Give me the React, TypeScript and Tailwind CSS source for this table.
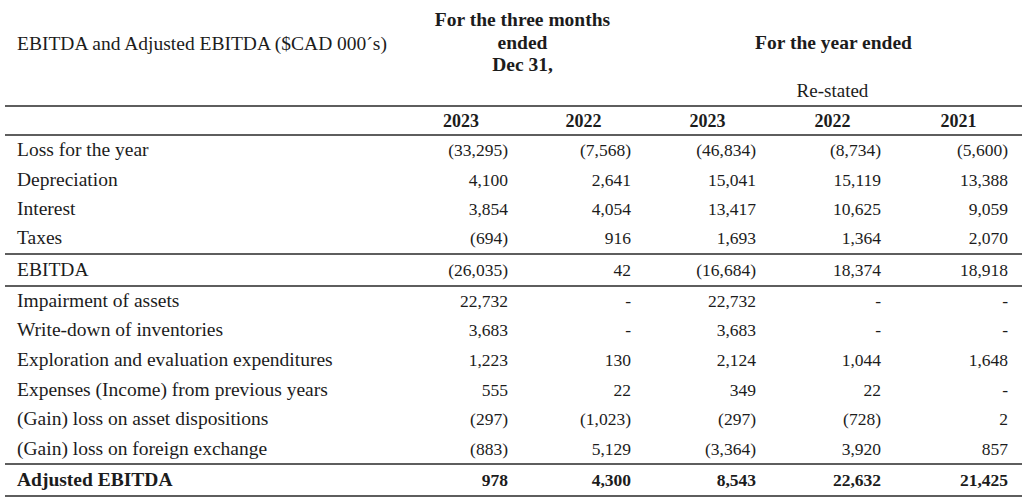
const rows: { label: string; values: string[]; total?: boolean; bold?: boolean }[] = [
  { label: 'Loss for the year', values: ['(33,295)', '(7,568)', '(46,834)', '(8,734)', '(5,600)'] },
  { label: 'Depreciation', values: ['4,100', '2,641', '15,041', '15,119', '13,388'] },
  { label: 'Interest', values: ['3,854', '4,054', '13,417', '10,625', '9,059'] },
  { label: 'Taxes', values: ['(694)', '916', '1,693', '1,364', '2,070'] },
  { label: 'EBITDA', values: ['(26,035)', '42', '(16,684)', '18,374', '18,918'], total: true },
  { label: 'Impairment of assets', values: ['22,732', '-', '22,732', '-', '-'] },
  { label: 'Write-down of inventories', values: ['3,683', '-', '3,683', '-', '-'] },
  { label: 'Exploration and evaluation expenditures', values: ['1,223', '130', '2,124', '1,044', '1,648'] },
  { label: 'Expenses (Income) from previous years', values: ['555', '22', '349', '22', '-'] },
  { label: '(Gain) loss on asset dispositions', values: ['(297)', '(1,023)', '(297)', '(728)', '2'] },
  { label: '(Gain) loss on foreign exchange', values: ['(883)', '5,129', '(3,364)', '3,920', '857'] },
  { label: 'Adjusted EBITDA', values: ['978', '4,300', '8,543', '22,632', '21,425'], total: true, bold: true },
]

export default function App() {
  return (
    <div className="w-[1024px] h-[504px] bg-white text-[#1c1c1c] overflow-hidden" style={{ fontFamily: '"Liberation Serif", serif' }}>
      <table className="ml-[5px] w-[1017px] table-fixed border-collapse text-[17.5px] leading-[20px]">
        <colgroup>
          <col className="w-[395px]" />
          <col className="w-[122px]" />
          <col className="w-[123px]" />
          <col className="w-[125px]" />
          <col className="w-[125px]" />
          <col className="w-[127px]" />
        </colgroup>
        <thead>
          <tr className="h-[80px]">
            <td className="pl-3 pt-[7px] align-middle text-[19.5px] whitespace-nowrap">EBITDA and Adjusted EBITDA ($CAD 000´s)</td>
            <td colSpan={2} className="pt-[6px] text-center font-bold leading-[22.5px] align-middle text-[19.5px]">
              For the three months
              <br />
              ended
              <br />
              Dec 31,
            </td>
            <td colSpan={3} className="pt-[6px] text-center font-bold align-middle text-[19.5px]">For the year ended</td>
          </tr>
          <tr className="h-[26px]">
            <td colSpan={4}></td>
            <td className="text-center align-top text-[19px] leading-[22px]">Re-stated</td>
            <td></td>
          </tr>
          <tr className="h-[29px] border-t-2 border-b-2 border-[#5e5e5e] font-bold text-[18px]">
            <td></td>
            {['2023', '2022', '2023', '2022', '2021'].map((y, i) => (
              <td key={i} className="text-center">{y}</td>
            ))}
          </tr>
        </thead>
        <tbody>
          {rows.map((r) => (
            <tr
              key={r.label}
              className={
                r.total
                  ? `h-[32px] border-t-2 border-b-2 border-[#5e5e5e] ${r.bold ? 'font-bold' : ''}`
                  : 'h-[29.7px]'
              }
            >
              <td className="pl-3 whitespace-nowrap text-[19.5px]">{r.label}</td>
              {r.values.map((v, i) => (
                <td key={i} className="text-right pr-[14px] whitespace-nowrap">{v}</td>
              ))}
            </tr>
          ))}
        </tbody>
      </table>
    </div>
  )
}
